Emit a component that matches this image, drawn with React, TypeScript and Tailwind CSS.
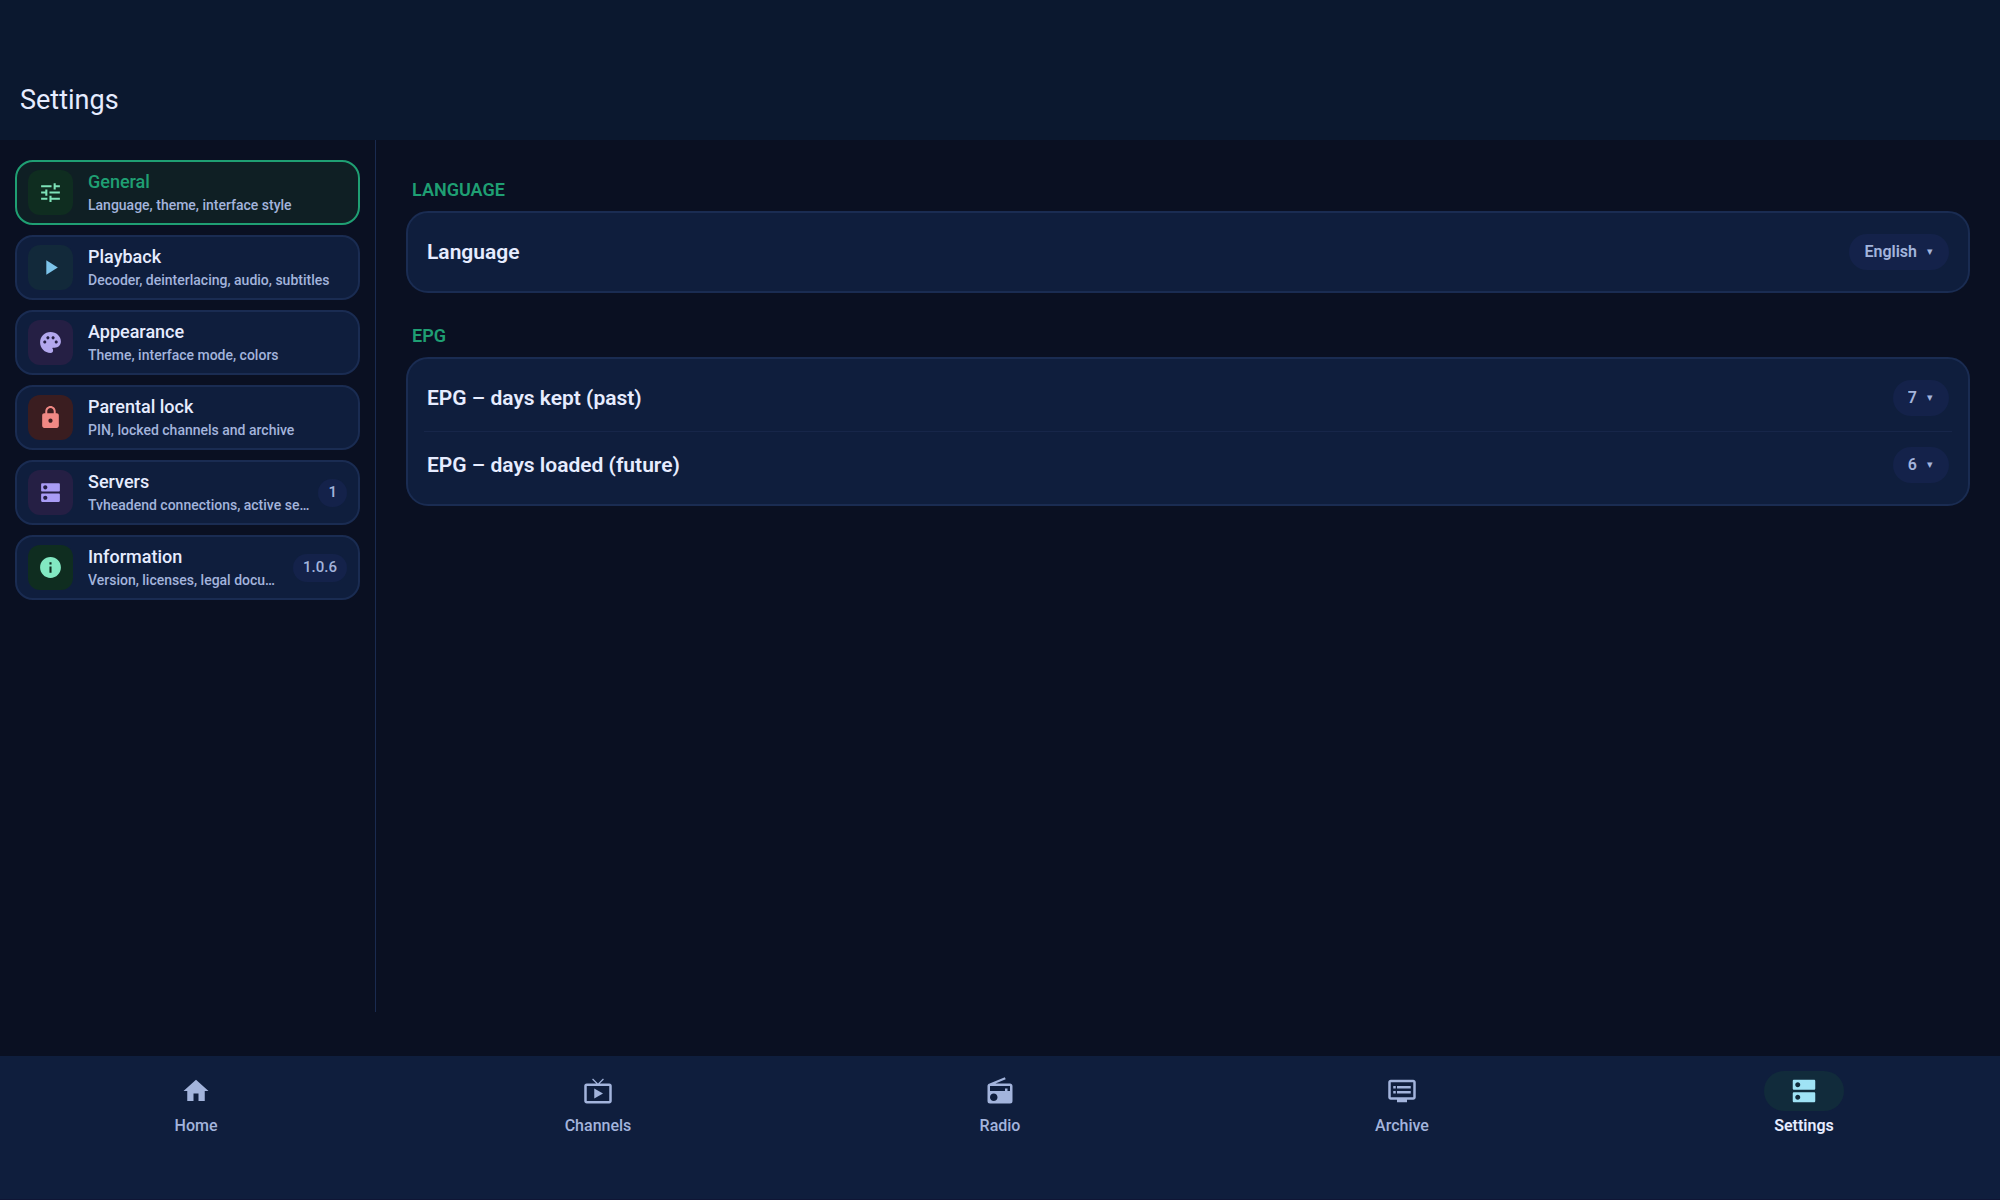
import { useState } from "react";
import {
  MdDns,
  MdDvr,
  MdHome,
  MdInfo,
  MdLiveTv,
  MdLock,
  MdPalette,
  MdPlayArrow,
  MdRadio,
  MdTune,
} from "react-icons/md";

const sections = [
  {
    title: "General",
    desc: "Language, theme, interface style",
    icon: MdTune,
    tile: "bg-[#0f2d20] text-[#7ee3b8]",
  },
  {
    title: "Playback",
    desc: "Decoder, deinterlacing, audio, subtitles",
    icon: MdPlayArrow,
    tile: "bg-[#12293a] text-[#7cc4ea]",
  },
  {
    title: "Appearance",
    desc: "Theme, interface mode, colors",
    icon: MdPalette,
    tile: "bg-[#251f44] text-[#b3a8ee]",
  },
  {
    title: "Parental lock",
    desc: "PIN, locked channels and archive",
    icon: MdLock,
    tile: "bg-[#3a1d20] text-[#f08884]",
  },
  {
    title: "Servers",
    desc: "Tvheadend connections, active se…",
    icon: MdDns,
    tile: "bg-[#251f44] text-[#a99cf5]",
    badge: "1",
  },
  {
    title: "Information",
    desc: "Version, licenses, legal docu…",
    icon: MdInfo,
    tile: "bg-[#0f2d20] text-[#82e8c2]",
    badge: "1.0.6",
  },
];

const tabs = [
  { title: "Home", icon: MdHome },
  { title: "Channels", icon: MdLiveTv },
  { title: "Radio", icon: MdRadio },
  { title: "Archive", icon: MdDvr },
  { title: "Settings", icon: MdDns },
];

const days = ["1", "2", "3", "4", "5", "6", "7"];

const groups = [
  {
    title: "LANGUAGE",
    rows: [
      {
        id: "language",
        label: "Language",
        value: "English",
        options: ["English", "Deutsch", "Polski"],
      },
    ],
  },
  {
    title: "EPG",
    rows: [
      { id: "epg-past", label: "EPG – days kept (past)", value: "7", options: days },
      { id: "epg-future", label: "EPG – days loaded (future)", value: "6", options: days },
    ],
  },
];

type RowProps = { id: string; label: string; value: string; options: string[] };

const SettingRow = ({ id, label, value, options }: RowProps) => (
  <div className="box-content flex h-[66px] items-center justify-between px-[3px]">
    <label
      htmlFor={id}
      className="text-[21px] leading-7 font-semibold text-[#e6ecff]"
    >
      {label}
    </label>
    <div className="relative text-[#a3b4dc]">
      <select
        id={id}
        defaultValue={value}
        className="block field-sizing-content h-9 appearance-none rounded-full bg-[#14224a] pr-8 pl-[15px] text-base font-semibold"
      >
        {options.map((option) => (
          <option key={option}>{option}</option>
        ))}
      </select>
      <span
        aria-hidden="true"
        className="pointer-events-none absolute inset-y-0 right-4 flex items-center text-[11px]"
      >
        ▾
      </span>
    </div>
  </div>
);

const App: React.FC = () => {
  const [section, setSection] = useState<string>("General");
  const [tab, setTab] = useState<string>("Settings");

  return (
    <div className="flex min-h-screen flex-col bg-[#0a1022] font-[Roboto,sans-serif]">
      <header className="flex h-[140px] items-end bg-[#0b182f] px-5 pb-5">
        <h1 className="text-[27px] leading-[40px] text-[#e6ecff]">Settings</h1>
      </header>

      <div className="flex flex-1">
        <aside className="mb-11 flex w-[376px] shrink-0 flex-col gap-[10px] border-r border-[#1a2b50] px-[15px] pt-5">
          {sections.map((item) => {
            const Icon = item.icon;
            const active = item.title === section;
            return (
              <button
                key={item.title}
                type="button"
                onClick={() => setSection(item.title)}
                className={`flex h-[65px] items-center rounded-[18px] border-2 px-[11px] text-left ${
                  active
                    ? "border-[#1f9f73] bg-[#0f1f24]"
                    : "border-[#1a2c52] bg-[#0f1e3d]"
                }`}
              >
                <span
                  className={`flex size-[45px] shrink-0 items-center justify-center rounded-xl ${item.tile}`}
                >
                  <Icon size={25} />
                </span>
                <span className="ml-[15px] flex min-w-0 flex-1 flex-col">
                  <span
                    className={`text-lg leading-6 font-medium ${
                      active ? "text-[#1f9f73]" : "text-[#e6ecff]"
                    }`}
                  >
                    {item.title}
                  </span>
                  <span className="truncate text-sm leading-[22px] font-medium text-[#a3b4dc]">
                    {item.desc}
                  </span>
                </span>
                {item.badge && (
                  <span className="ml-1 flex h-7 items-center rounded-full bg-[#14224a] px-[10px] text-[15px] font-medium text-[#a3b4dc]">
                    {item.badge}
                  </span>
                )}
              </button>
            );
          })}
        </aside>

        <main className="flex flex-1 flex-col gap-[29px] px-[30px] pt-9">
          {groups.map((group) => (
            <section key={group.title}>
              <h2 className="mb-2 pl-[6px] text-lg leading-[27px] font-semibold text-[#1f9f73]">
                {group.title}
              </h2>
              <div className="divide-y divide-[#172649] rounded-[22px] border-2 border-[#1a2c52] bg-[#0f1e3d] px-4 py-[6px]">
                {group.rows.map((row) => (
                  <SettingRow key={row.id} {...row} />
                ))}
              </div>
            </section>
          ))}
        </main>
      </div>

      <nav className="flex h-36 gap-[10px] border-b border-[#0f1535] bg-[#0f1e3d] pt-[15px]">
        {tabs.map((item) => {
          const Icon = item.icon;
          const active = item.title === tab;
          return (
            <button
              key={item.title}
              type="button"
              onClick={() => setTab(item.title)}
              className={`flex flex-1 flex-col items-center gap-[5px] text-base leading-5 ${
                active ? "font-semibold text-[#e6ecff]" : "font-medium text-[#a3b4dc]"
              }`}
            >
              <span
                className={`flex h-10 w-20 items-center justify-center rounded-full ${
                  active ? "bg-[#112b3b] text-[#9fe3f5]" : ""
                }`}
              >
                <Icon size={30} />
              </span>
              {item.title}
            </button>
          );
        })}
      </nav>
    </div>
  );
};

export default App;
